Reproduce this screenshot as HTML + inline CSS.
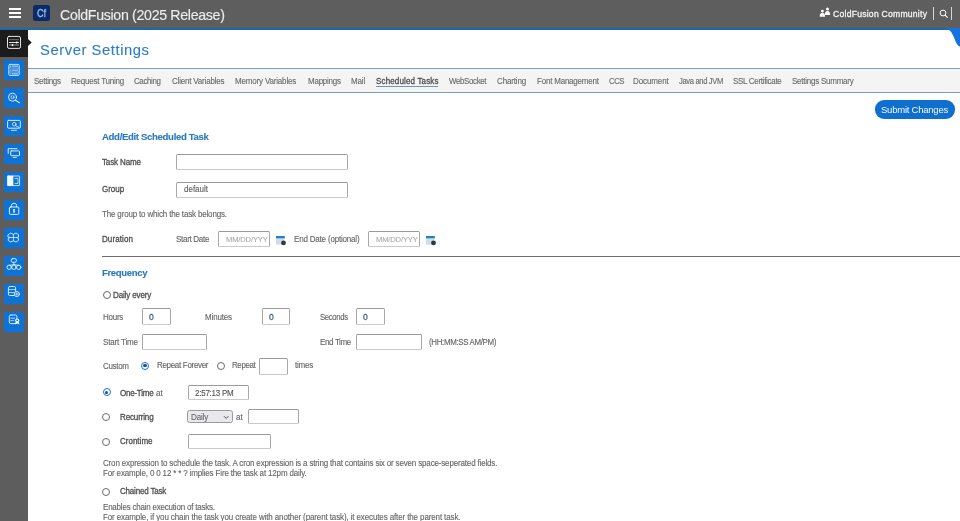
<!DOCTYPE html>
<html><head><meta charset="utf-8"><style>
html,body{margin:0;padding:0;width:960px;height:521px;overflow:hidden;background:#fff;}
body{position:relative;font-family:"Liberation Sans",sans-serif;}
.a{position:absolute;}
.t{position:absolute;white-space:nowrap;line-height:1;will-change:transform;-webkit-text-stroke:0.12px currentColor;}
</style></head><body>
<div class="a" style="left:0.00px;top:0.00px;width:960.00px;height:28.00px;background:#5e5e5e;"></div>
<div class="a" style="left:0.00px;top:28.00px;width:960.00px;height:2.00px;background:#1c68a8;"></div>
<div class="a" style="left:9.00px;top:8.00px;width:12.00px;height:2.00px;background:#fff;"></div>
<div class="a" style="left:9.00px;top:12.00px;width:12.00px;height:2.00px;background:#fff;"></div>
<div class="a" style="left:9.00px;top:16.00px;width:12.00px;height:2.00px;background:#fff;"></div>
<div class="a" style="left:33.00px;top:5.00px;width:16.80px;height:15.80px;background:#0b2a66;border-radius:2.5px;"></div>
<div class="t" style="left:36.6px;top:8.60px;font-size:10.4px;color:#9cc8ff;-webkit-text-stroke:0.3px #9cc8ff;transform:scaleX(0.86);transform-origin:0 0;">Cf</div>
<div class="t" style="left:60.40px;top:8.48px;font-size:14.200px;color:#ededed;letter-spacing:-0.3271px;">ColdFusion (2025 Release)</div>
<svg class="a" style="left:819px;top:7px" width="12" height="11" viewBox="0 0 12 11"><circle cx="3.4" cy="4.1" r="1.45" fill="#fff"/><path d="M0.7 9.7 Q0.7 5.8 3.4 5.8 Q6.1 5.8 6.1 9.7Z" fill="#fff"/><circle cx="8.5" cy="2.1" r="1.5" fill="#fff"/><path d="M5.9 8 Q5.9 4.1 8.5 4.1 Q11.1 4.1 11.1 8Z" fill="#fff"/></svg>
<div class="t" style="left:832.70px;top:9.62px;font-size:8.600px;color:#f4f4f4;letter-spacing:0.2436px;-webkit-text-stroke:0.28px #f4f4f4;">ColdFusion Community</div>
<div class="a" style="left:933.00px;top:6.50px;width:1.00px;height:13.50px;background:#d4d4d4;"></div>
<svg class="a" style="left:939px;top:9px" width="10" height="10" viewBox="0 0 10 10"><circle cx="4" cy="4" r="2.9" fill="none" stroke="#fff" stroke-width="1"/><path d="M6.1 6.1 L8.6 8.6" stroke="#fff" stroke-width="1.1"/></svg>
<div class="a" style="left:951.00px;top:7.00px;width:1.00px;height:13.30px;background:#d4d4d4;"></div>
<div class="a" style="left:28.00px;top:30.00px;width:932.00px;height:491.00px;background:#fff;"></div>
<svg class="a" style="left:940px;top:28px" width="20" height="22" viewBox="0 0 20 22"><path d="M3.5 0 C9.5 0 12 4.5 14 9.5 C16 14.5 17.6 18 20 18.6 L20 0 Z" fill="#1473de"/></svg>
<div class="a" style="left:0.00px;top:30.00px;width:28.00px;height:491.00px;background:#5d5d5d;"></div>
<div class="a" style="left:0.00px;top:30.00px;width:28.00px;height:27.00px;background:#1c1c1c;"></div>
<svg class="a" style="left:28px;top:39.4px" width="4" height="7" viewBox="0 0 4 7"><path d="M0 0 L3.7 3.45 L0 6.9Z" fill="#1c1c1c"/></svg>
<div class="a" style="left:3.60px;top:59.60px;width:20.40px;height:20.30px;background:#0e72d5;"></div>
<div class="a" style="left:3.60px;top:87.60px;width:20.40px;height:20.30px;background:#0e72d5;"></div>
<div class="a" style="left:3.60px;top:115.60px;width:20.40px;height:20.30px;background:#0e72d5;"></div>
<div class="a" style="left:3.60px;top:143.60px;width:20.40px;height:20.30px;background:#0e72d5;"></div>
<div class="a" style="left:3.60px;top:171.60px;width:20.40px;height:20.30px;background:#0e72d5;"></div>
<div class="a" style="left:3.60px;top:199.60px;width:20.40px;height:20.30px;background:#0e72d5;"></div>
<div class="a" style="left:3.60px;top:227.60px;width:20.40px;height:20.30px;background:#0e72d5;"></div>
<div class="a" style="left:3.60px;top:255.60px;width:20.40px;height:20.30px;background:#0e72d5;"></div>
<div class="a" style="left:3.60px;top:283.60px;width:20.40px;height:20.30px;background:#0e72d5;"></div>
<div class="a" style="left:3.60px;top:311.60px;width:20.40px;height:20.30px;background:#0e72d5;"></div>
<svg class="a" style="left:0;top:0" width="28" height="340" viewBox="0 0 28 340" fill="none" stroke="#fff" stroke-linecap="round" stroke-linejoin="round"><rect x="7.5" y="36.4" width="13" height="12" rx="1.6" stroke="#e6e6e6" stroke-width="1"/><path d="M9.4 39.7 H18.6" stroke="#8a8a8a" stroke-width="0.8"/><path d="M9.4 42.5 H18.6" stroke="#f4f4f4" stroke-width="0.9"/><path d="M9.4 45 H18.6" stroke="#a8a8a8" stroke-width="0.9"/><circle cx="16.7" cy="42.5" r="0.9" fill="#fff" stroke="none"/><circle cx="12.4" cy="45" r="0.9" fill="#fff" stroke="none"/><rect x="8.8" y="64.4" width="10.4" height="11" rx="1" stroke="#d8eeff" stroke-width="0.9"/><path d="M8.8 68 H19.2 M8.8 72 H19.2" stroke="#b9dcff" stroke-width="0.7"/><path d="M11.6 66.2 H18 M11.6 70.1 H18 M11.6 73.8 H18" stroke="#a9d2ff" stroke-width="1.3" stroke-linecap="butt"/><circle cx="10.3" cy="66.2" r="0.6" fill="#fff" stroke="none"/><circle cx="10.3" cy="70.1" r="0.6" fill="#fff" stroke="none"/><circle cx="10.3" cy="73.8" r="0.5" fill="#cde" stroke="none"/><circle cx="12.5" cy="97.2" r="4" stroke="#d6efff" stroke-width="1"/><circle cx="12.5" cy="97.2" r="1.5" stroke="#d6efff" stroke-width="0.8"/><path d="M15.6 100.3 L19.4 102.8" stroke="#d6efff" stroke-width="1.1"/><rect x="7.6" y="120.4" width="12.7" height="7.8" rx="0.8" stroke="#d6efff" stroke-width="1"/><circle cx="14.2" cy="124.2" r="1.8" stroke="#d6efff" stroke-width="0.85"/><path d="M15.6 125.6 L19.2 127.6" stroke="#d6efff" stroke-width="0.9"/><path d="M11.3 130.3 H16.4" stroke="#d6efff" stroke-width="0.9"/><path d="M8.2 153.5 V148.7 H17" stroke="#d6efff" stroke-width="1"/><rect x="10.7" y="150.9" width="8.8" height="4.8" rx="0.6" stroke="#d6efff" stroke-width="1"/><path d="M13.2 157.4 H16.4" stroke="#d6efff" stroke-width="0.9"/><rect x="7.6" y="176" width="12" height="9.6" rx="0.5" stroke="#d6efff" stroke-width="0.9"/><rect x="7.4" y="175.8" width="5.9" height="10" fill="#eef8ff" stroke="none"/><path d="M15 178.4 H18 V183.4 H15" stroke="#d6efff" stroke-width="0.8"/><path d="M11.4 206.8 V205.6 A2.6 2.4 0 0 1 16.6 205.6 V206.8" stroke="#d6efff" stroke-width="1"/><rect x="9.4" y="207" width="9.4" height="7.4" rx="1" stroke="#d6efff" stroke-width="1"/><rect x="13.2" y="209" width="1.6" height="3.6" fill="#e6f6ff" stroke="none"/><path d="M8.3 234.6 L10.8 233 L13.4 234.4 L16 233 L18.5 234.6 V237 L16.2 237.5 L18.5 238.2 V240.6 L16 242 L13.4 240.8 L10.8 242 L8.3 240.6 V238.2 L10.6 237.5 L8.3 237 Z" stroke="#d6efff" stroke-width="0.9"/><path d="M13.4 234.4 V240.8 M10.6 237.5 H16.2" stroke="#d6efff" stroke-width="0.8"/><rect x="11.1" y="258.6" width="5.4" height="3.7" rx="1.8" stroke="#d6efff" stroke-width="0.95"/><path d="M13.8 262.4 V264.5 M9.3 265.4 L13.8 264.5 L18.7 265.4" stroke="#d6efff" stroke-width="0.85"/><circle cx="9.2" cy="267.3" r="2.2" stroke="#d6efff" stroke-width="0.95"/><circle cx="13.9" cy="267.3" r="2.2" stroke="#d6efff" stroke-width="0.95"/><circle cx="18.7" cy="267.3" r="2.2" stroke="#d6efff" stroke-width="0.95"/><rect x="8.4" y="286.5" width="7.2" height="9" rx="1.3" stroke="#d6efff" stroke-width="0.95"/><path d="M8.4 289.6 H15.6 M8.4 292.6 H13.6" stroke="#d6efff" stroke-width="0.8"/><circle cx="16.8" cy="294" r="2.6" fill="#0e72d5" stroke="#d6efff" stroke-width="0.95"/><path d="M16.8 292.6 V295.4 M15.4 294 H18.2" stroke="#d6efff" stroke-width="0.75"/><rect x="9.3" y="315" width="7.6" height="8.6" rx="1.6" stroke="#d6efff" stroke-width="0.95"/><path d="M11 318.2 H14.6 M11 320.6 H13.4" stroke="#d6efff" stroke-width="0.8"/><circle cx="17.2" cy="320.6" r="2.1" fill="#f0f8ff" stroke="none"/><circle cx="17.2" cy="320.4" r="0.8" fill="#0e72d5" stroke="none"/><path d="M15.6 322 L14.9 324.6 L17.2 323.6 L19.5 324.6 L18.8 322 Z" fill="#f0f8ff" stroke="none"/></svg>
<div class="t" style="left:40.20px;top:43.17px;font-size:14.800px;color:#2e7dc2;letter-spacing:0.5590px;">Server Settings</div>
<div class="a" style="left:28.00px;top:68.00px;width:932.00px;height:25.00px;background:#f4f4f4;border-top:1px solid #78a0c2;border-bottom:1px solid #78a0c2;box-sizing:border-box;"></div>
<div class="t" style="left:33.50px;top:77.93px;font-size:8.000px;color:#6a6a6a;letter-spacing:-0.2721px;transform:scale(1.0000,1.08);transform-origin:0 6.07px;">Settings</div>
<div class="t" style="left:71.00px;top:77.93px;font-size:8.000px;color:#6a6a6a;letter-spacing:-0.2142px;transform:scale(1.0000,1.08);transform-origin:0 6.07px;">Request Tuning</div>
<div class="t" style="left:134.25px;top:77.99px;font-size:7.932px;color:#6a6a6a;letter-spacing:-0.3500px;transform:scale(1.0000,1.08);transform-origin:0 6.01px;">Caching</div>
<div class="t" style="left:171.75px;top:77.93px;font-size:8.000px;color:#6a6a6a;letter-spacing:-0.1954px;transform:scale(1.0000,1.08);transform-origin:0 6.07px;">Client Variables</div>
<div class="t" style="left:235.00px;top:77.93px;font-size:8.000px;color:#6a6a6a;letter-spacing:-0.1745px;transform:scale(1.0000,1.08);transform-origin:0 6.07px;">Memory Variables</div>
<div class="t" style="left:307.50px;top:77.93px;font-size:8.000px;color:#6a6a6a;letter-spacing:-0.2407px;transform:scale(1.0000,1.08);transform-origin:0 6.07px;">Mappings</div>
<div class="t" style="left:351.25px;top:77.93px;font-size:8.000px;color:#6a6a6a;letter-spacing:-0.1392px;transform:scale(1.0000,1.08);transform-origin:0 6.07px;">Mail</div>
<div class="t" style="left:375.50px;top:77.93px;font-size:8.000px;color:#4d4d4d;letter-spacing:0.1548px;transform:scale(1.0000,1.08);transform-origin:0 6.07px;-webkit-text-stroke:0.28px #4d4d4d;">Scheduled Tasks</div>
<div class="a" style="left:375.50px;top:86.40px;width:62.50px;height:1.10px;background:#6d94bd;"></div>
<div class="t" style="left:448.75px;top:78.00px;font-size:7.910px;color:#6a6a6a;letter-spacing:-0.3500px;transform:scale(1.0000,1.08);transform-origin:0 6.00px;">WebSocket</div>
<div class="t" style="left:497.00px;top:77.93px;font-size:8.000px;color:#6a6a6a;letter-spacing:-0.1409px;transform:scale(1.0000,1.08);transform-origin:0 6.07px;">Charting</div>
<div class="t" style="left:536.75px;top:77.93px;font-size:8.000px;color:#6a6a6a;letter-spacing:-0.2086px;transform:scale(1.0000,1.08);transform-origin:0 6.07px;">Font Management</div>
<div class="t" style="left:608.70px;top:78.10px;font-size:7.800px;color:#6a6a6a;transform:scale(1.0000,1.08);transform-origin:0 5.90px;letter-spacing:-0.45px;">CCS</div>
<div class="t" style="left:633.00px;top:77.93px;font-size:8.000px;color:#6a6a6a;letter-spacing:-0.1013px;transform:scale(1.0000,1.08);transform-origin:0 6.07px;">Document</div>
<div class="t" style="left:678.75px;top:78.27px;font-size:7.600px;color:#6a6a6a;letter-spacing:-0.3500px;transform:scale(1.0000,1.08);transform-origin:0 5.73px;">Java and JVM</div>
<div class="t" style="left:732.50px;top:77.93px;font-size:8.000px;color:#6a6a6a;letter-spacing:-0.3077px;transform:scale(1.0000,1.08);transform-origin:0 6.07px;">SSL Certificate</div>
<div class="t" style="left:792.00px;top:77.93px;font-size:8.000px;color:#6a6a6a;letter-spacing:-0.2402px;transform:scale(1.0000,1.08);transform-origin:0 6.07px;">Settings Summary</div>
<div class="a" style="left:875.00px;top:100.40px;width:79.50px;height:18.20px;background:#0f6fcf;border-radius:9px;"></div>
<div class="t" style="left:881.40px;top:105.36px;font-size:9.500px;color:#f4f9ff;letter-spacing:-0.2331px;-webkit-text-stroke:0;">Submit Changes</div>
<div class="t" style="left:102.00px;top:132.26px;font-size:9.617px;color:#2b7bc0;font-weight:700;letter-spacing:-0.3500px;">Add/Edit Scheduled Task</div>
<div class="t" style="left:102.00px;top:159.23px;font-size:8.000px;color:#4f4f4f;letter-spacing:-0.1262px;transform:scale(1.0000,1.1);transform-origin:0 6.07px;-webkit-text-stroke:0.28px #4f4f4f;">Task Name</div>
<div class="a" style="left:176.00px;top:154.30px;width:171.80px;height:16.00px;border:1px solid #a8a8a8;border-top-color:#9a9a9a;border-bottom-color:#cacaca;border-radius:1.5px;background:#fff;box-sizing:border-box;"></div>
<div class="t" style="left:102.00px;top:186.33px;font-size:8.000px;color:#4f4f4f;letter-spacing:-0.0331px;transform:scale(1.0000,1.1);transform-origin:0 6.07px;-webkit-text-stroke:0.28px #4f4f4f;">Group</div>
<div class="a" style="left:176.00px;top:181.50px;width:171.80px;height:16.00px;border:1px solid #a8a8a8;border-top-color:#9a9a9a;border-bottom-color:#cacaca;border-radius:1.5px;background:#fff;box-sizing:border-box;"></div>
<div class="t" style="left:183.80px;top:186.33px;font-size:8.000px;color:#606060;letter-spacing:-0.0029px;transform:scale(1.0000,1.1);transform-origin:0 6.07px;">default</div>
<div class="t" style="left:102.30px;top:210.83px;font-size:8.000px;color:#666666;letter-spacing:-0.1639px;transform:scale(1.0000,1.1);transform-origin:0 6.07px;">The group to which the task belongs.</div>
<div class="t" style="left:102.00px;top:235.73px;font-size:8.000px;color:#4f4f4f;letter-spacing:0.0948px;transform:scale(1.0000,1.1);transform-origin:0 6.07px;-webkit-text-stroke:0.28px #4f4f4f;">Duration</div>
<div class="t" style="left:175.80px;top:235.73px;font-size:8.000px;color:#666666;letter-spacing:-0.2904px;transform:scale(1.0000,1.1);transform-origin:0 6.07px;">Start Date</div>
<div class="a" style="left:217.80px;top:231.10px;width:52.10px;height:15.80px;border:1px solid #a8a8a8;border-top-color:#9a9a9a;border-bottom-color:#cacaca;border-radius:1.5px;background:#fff;box-sizing:border-box;"></div>
<div class="t" style="left:225.60px;top:236.17px;font-size:7.600px;color:#ababab;letter-spacing:-0.1587px;">MM/DD/YYY</div>
<svg class="a" style="left:276px;top:235.8px" width="11" height="11" viewBox="0 0 11 11"><rect x="0" y="0" width="8.8" height="2.6" fill="#1c86c2"/><rect x="0" y="2.6" width="8" height="6" fill="#d5dbe0"/><circle cx="7.5" cy="6.9" r="2.4" fill="#303840"/></svg>
<div class="t" style="left:293.50px;top:235.73px;font-size:8.000px;color:#666666;letter-spacing:-0.1847px;transform:scale(1.0000,1.1);transform-origin:0 6.07px;">End Date (optional)</div>
<div class="a" style="left:367.80px;top:231.30px;width:52.00px;height:15.60px;border:1px solid #a8a8a8;border-top-color:#9a9a9a;border-bottom-color:#cacaca;border-radius:1.5px;background:#fff;box-sizing:border-box;"></div>
<div class="t" style="left:375.50px;top:236.17px;font-size:7.600px;color:#ababab;letter-spacing:-0.1587px;">MM/DD/YYY</div>
<svg class="a" style="left:426px;top:235.5px" width="11" height="11" viewBox="0 0 11 11"><rect x="0" y="0" width="8.8" height="2.6" fill="#1c86c2"/><rect x="0" y="2.6" width="8" height="6" fill="#d5dbe0"/><circle cx="7.5" cy="6.9" r="2.4" fill="#303840"/></svg>
<div class="a" style="left:102.00px;top:255.60px;width:858.00px;height:1.20px;background:#6e6e6e;"></div>
<div class="t" style="left:102.00px;top:267.51px;font-size:9.552px;color:#2b7bc0;font-weight:700;letter-spacing:-0.3500px;">Frequency</div>
<div class="a" style="left:102.50px;top:291.20px;width:8.00px;height:8.00px;border:1px solid #6a6a6a;border-radius:50%;box-sizing:border-box;"></div>
<div class="t" style="left:112.50px;top:291.53px;font-size:8.000px;color:#4f4f4f;letter-spacing:-0.1265px;transform:scale(1.0000,1.1);transform-origin:0 6.07px;-webkit-text-stroke:0.28px #4f4f4f;">Daily every</div>
<div class="t" style="left:102.80px;top:313.63px;font-size:8.000px;color:#666666;letter-spacing:-0.2597px;transform:scale(1.0000,1.1);transform-origin:0 6.07px;">Hours</div>
<div class="a" style="left:142.20px;top:308.30px;width:28.80px;height:16.70px;border:1px solid #a8a8a8;border-top-color:#9a9a9a;border-bottom-color:#cacaca;border-radius:1.5px;background:#fff;box-sizing:border-box;"></div>
<div class="t" style="left:149.40px;top:313.32px;font-size:8.600px;color:#3e5f80;letter-spacing:-0.1824px;transform:scale(1.0000,1.05);transform-origin:0 6.58px;-webkit-text-stroke:0.25px #3e5f80;">0</div>
<div class="t" style="left:204.60px;top:313.63px;font-size:8.000px;color:#666666;letter-spacing:-0.1517px;transform:scale(1.0000,1.1);transform-origin:0 6.07px;">Minutes</div>
<div class="a" style="left:261.60px;top:308.30px;width:28.40px;height:16.70px;border:1px solid #a8a8a8;border-top-color:#9a9a9a;border-bottom-color:#cacaca;border-radius:1.5px;background:#fff;box-sizing:border-box;"></div>
<div class="t" style="left:268.80px;top:313.32px;font-size:8.600px;color:#3e5f80;letter-spacing:-0.1824px;transform:scale(1.0000,1.05);transform-origin:0 6.58px;-webkit-text-stroke:0.25px #3e5f80;">0</div>
<div class="t" style="left:319.60px;top:313.83px;font-size:7.761px;color:#666666;letter-spacing:-0.3500px;transform:scale(1.0000,1.1);transform-origin:0 5.87px;">Seconds</div>
<div class="a" style="left:355.70px;top:308.30px;width:29.30px;height:16.70px;border:1px solid #a8a8a8;border-top-color:#9a9a9a;border-bottom-color:#cacaca;border-radius:1.5px;background:#fff;box-sizing:border-box;"></div>
<div class="t" style="left:363.00px;top:313.32px;font-size:8.600px;color:#3e5f80;letter-spacing:-0.1824px;transform:scale(1.0000,1.05);transform-origin:0 6.58px;-webkit-text-stroke:0.25px #3e5f80;">0</div>
<div class="t" style="left:102.70px;top:338.73px;font-size:8.000px;color:#666666;letter-spacing:-0.1613px;transform:scale(1.0000,1.1);transform-origin:0 6.07px;">Start Time</div>
<div class="a" style="left:142.20px;top:333.80px;width:64.50px;height:15.90px;border:1px solid #a8a8a8;border-top-color:#9a9a9a;border-bottom-color:#cacaca;border-radius:1.5px;background:#fff;box-sizing:border-box;"></div>
<div class="t" style="left:319.60px;top:338.74px;font-size:7.990px;color:#666666;letter-spacing:-0.3500px;transform:scale(1.0000,1.1);transform-origin:0 6.06px;">End Time</div>
<div class="a" style="left:355.90px;top:333.80px;width:65.90px;height:15.90px;border:1px solid #a8a8a8;border-top-color:#9a9a9a;border-bottom-color:#cacaca;border-radius:1.5px;background:#fff;box-sizing:border-box;"></div>
<div class="t" style="left:428.80px;top:338.58px;font-size:7.937px;color:#666666;letter-spacing:-0.3500px;transform:scale(1.0000,1.1);transform-origin:0 6.02px;">(HH:MM:SS AM/PM)</div>
<div class="t" style="left:102.70px;top:363.33px;font-size:8.000px;color:#666666;letter-spacing:-0.3123px;transform:scale(1.0000,1.1);transform-origin:0 6.07px;">Custom</div>
<div class="a" style="left:141.00px;top:361.60px;width:8.20px;height:8.20px;border:1.5px solid #1f6fd0;border-radius:50%;box-sizing:border-box;"></div>
<div class="a" style="left:143.35px;top:363.95px;width:3.50px;height:3.50px;background:#0b4fb8;border-radius:50%;"></div>
<div class="t" style="left:157.00px;top:361.63px;font-size:8.000px;color:#666666;letter-spacing:-0.3137px;transform:scale(1.0000,1.1);transform-origin:0 6.07px;">Repeat Forever</div>
<div class="a" style="left:216.90px;top:361.60px;width:8.00px;height:8.00px;border:1px solid #6a6a6a;border-radius:50%;box-sizing:border-box;"></div>
<div class="t" style="left:232.00px;top:361.69px;font-size:7.924px;color:#666666;letter-spacing:-0.3500px;transform:scale(1.0000,1.1);transform-origin:0 6.01px;">Repeat</div>
<div class="a" style="left:258.90px;top:358.30px;width:28.80px;height:16.40px;border:1px solid #a8a8a8;border-top-color:#9a9a9a;border-bottom-color:#cacaca;border-radius:1.5px;background:#fff;box-sizing:border-box;"></div>
<div class="t" style="left:295.00px;top:362.13px;font-size:8.000px;color:#666666;letter-spacing:-0.2156px;transform:scale(1.0000,1.1);transform-origin:0 6.07px;">times</div>
<div class="a" style="left:102.50px;top:388.40px;width:8.00px;height:8.00px;border:1.5px solid #1f6fd0;border-radius:50%;box-sizing:border-box;"></div>
<div class="a" style="left:104.75px;top:390.65px;width:3.50px;height:3.50px;background:#0b4fb8;border-radius:50%;"></div>
<div class="t" style="left:119.50px;top:389.53px;font-size:8.000px;color:#4f4f4f;letter-spacing:-0.2377px;transform:scale(1.0000,1.1);transform-origin:0 6.07px;-webkit-text-stroke:0.28px #4f4f4f;">One-Time</div>
<div class="t" style="left:155.80px;top:389.53px;font-size:8.000px;color:#666666;letter-spacing:0.0288px;transform:scale(1.0000,1.1);transform-origin:0 6.07px;">at</div>
<div class="a" style="left:188.00px;top:384.60px;width:60.50px;height:15.90px;border:1px solid #a8a8a8;border-top-color:#9a9a9a;border-bottom-color:#cacaca;border-radius:1.5px;background:#fff;box-sizing:border-box;"></div>
<div class="t" style="left:195.30px;top:389.53px;font-size:8.000px;color:#555;letter-spacing:-0.2457px;transform:scale(1.0000,1.1);transform-origin:0 6.07px;">2:57:13 PM</div>
<div class="a" style="left:102.30px;top:413.30px;width:8.00px;height:8.00px;border:1px solid #6a6a6a;border-radius:50%;box-sizing:border-box;"></div>
<div class="t" style="left:119.50px;top:413.83px;font-size:8.000px;color:#4f4f4f;letter-spacing:-0.1347px;transform:scale(1.0000,1.1);transform-origin:0 6.07px;-webkit-text-stroke:0.28px #4f4f4f;">Recurring</div>
<div class="a" style="left:187.20px;top:410.00px;width:45.60px;height:13.40px;background:#e9e9ed;border:1px solid #9a9a9a;border-radius:2.5px;box-sizing:border-box;"></div>
<div class="t" style="left:190.60px;top:414.03px;font-size:8.000px;color:#6a6a6a;letter-spacing:-0.1453px;transform:scale(1.0000,1.1);transform-origin:0 6.07px;">Daily</div>
<svg class="a" style="left:223px;top:414.5px" width="7" height="5" viewBox="0 0 7 5"><path d="M1 1.2 L3.2 3.4 L5.4 1.2" fill="none" stroke="#555" stroke-width="1"/></svg>
<div class="t" style="left:236.30px;top:414.03px;font-size:8.000px;color:#666666;letter-spacing:0.0288px;transform:scale(1.0000,1.1);transform-origin:0 6.07px;">at</div>
<div class="a" style="left:247.90px;top:409.40px;width:51.20px;height:14.90px;border:1px solid #a8a8a8;border-top-color:#9a9a9a;border-bottom-color:#cacaca;border-radius:1.5px;background:#fff;box-sizing:border-box;"></div>
<div class="a" style="left:102.30px;top:437.80px;width:8.00px;height:8.00px;border:1px solid #6a6a6a;border-radius:50%;box-sizing:border-box;"></div>
<div class="t" style="left:119.50px;top:437.73px;font-size:8.000px;color:#4f4f4f;letter-spacing:0.0070px;transform:scale(1.0000,1.1);transform-origin:0 6.07px;-webkit-text-stroke:0.28px #4f4f4f;">Crontime</div>
<div class="a" style="left:188.20px;top:433.50px;width:82.80px;height:15.50px;border:1px solid #a8a8a8;border-top-color:#9a9a9a;border-bottom-color:#cacaca;border-radius:1.5px;background:#fff;box-sizing:border-box;"></div>
<div class="t" style="left:102.50px;top:459.53px;font-size:8.000px;color:#666666;letter-spacing:-0.1597px;transform:scale(1.0000,1.1);transform-origin:0 6.07px;">Cron expression to schedule the task. A cron expression is a string that contains six or seven space-seperated fields.</div>
<div class="t" style="left:102.50px;top:470.03px;font-size:8.000px;color:#666666;letter-spacing:-0.1560px;transform:scale(1.0000,1.1);transform-origin:0 6.07px;">For example, 0 0 12 * * ? implies Fire the task at 12pm daily.</div>
<div class="a" style="left:102.30px;top:487.60px;width:8.00px;height:8.00px;border:1px solid #6a6a6a;border-radius:50%;box-sizing:border-box;"></div>
<div class="t" style="left:119.50px;top:487.93px;font-size:8.000px;color:#4f4f4f;letter-spacing:-0.1841px;transform:scale(1.0000,1.1);transform-origin:0 6.07px;-webkit-text-stroke:0.28px #4f4f4f;">Chained Task</div>
<div class="t" style="left:102.50px;top:504.03px;font-size:8.000px;color:#666666;letter-spacing:-0.2104px;transform:scale(1.0000,1.1);transform-origin:0 6.07px;">Enables chain execution of tasks.</div>
<div class="t" style="left:102.50px;top:513.93px;font-size:8.000px;color:#666666;letter-spacing:-0.1204px;transform:scale(1.0000,1.1);transform-origin:0 6.07px;">For example, if you chain the task you create with another (parent task), it executes after the parent task.</div>
</body></html>
